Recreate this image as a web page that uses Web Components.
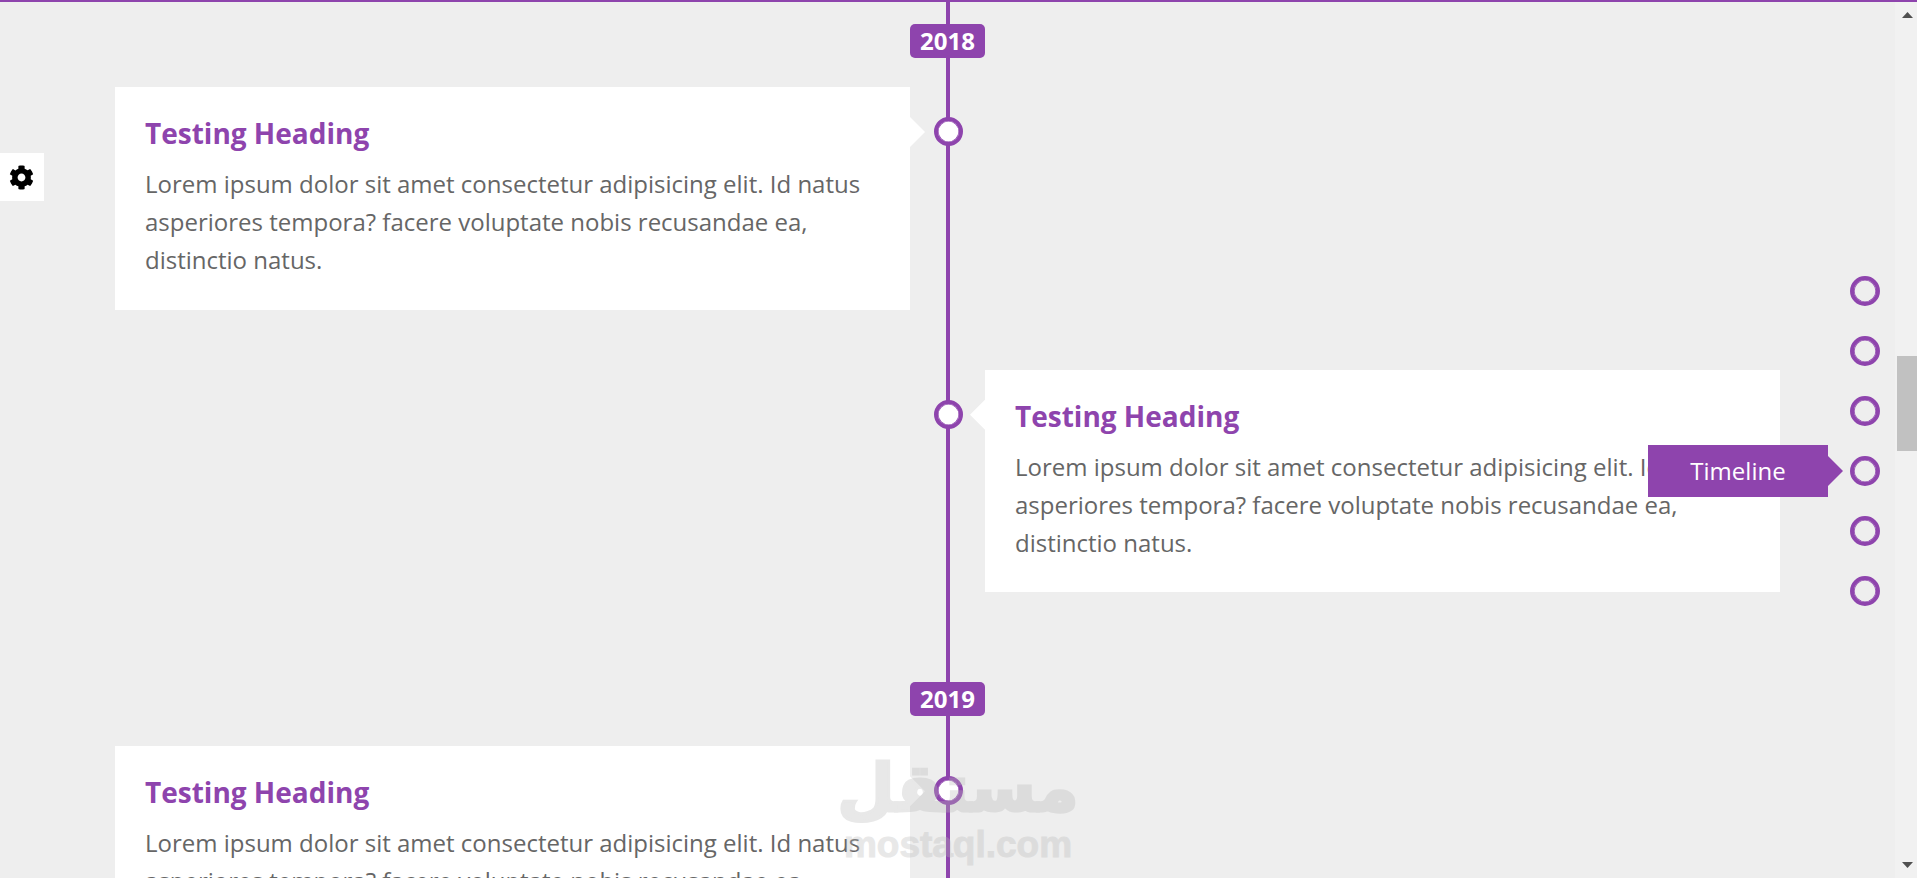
<!DOCTYPE html>
<html lang="en">
<head>
<meta charset="utf-8">
<title>Timeline</title>
<style>
    html, body { margin: 0; height: 100%; overflow: hidden; background: #eee; }
    body { font-family: "Open Sans", "Liberation Sans", sans-serif; }
</style>
</head>
<body>
<page-shell>
    <time-line>
        <year-badge>2018</year-badge>
        <timeline-item side="left" heading="Testing Heading">Lorem ipsum dolor sit amet consectetur adipisicing elit. Id natus asperiores tempora? facere voluptate nobis recusandae ea, distinctio natus.</timeline-item>
        <timeline-item side="right" heading="Testing Heading">Lorem ipsum dolor sit amet consectetur adipisicing elit. Id natus asperiores tempora? facere voluptate nobis recusandae ea, distinctio natus.</timeline-item>
        <year-badge class="later">2019</year-badge>
        <timeline-item side="left" heading="Testing Heading">Lorem ipsum dolor sit amet consectetur adipisicing elit. Id natus asperiores tempora? facere voluptate nobis recusandae ea, distinctio natus.</timeline-item>
    </time-line>
    <settings-tab slot="overlay"></settings-tab>
    <nav-dots slot="overlay" active="3" label="Timeline" count="6"></nav-dots>
    <water-mark slot="overlay"></water-mark>
</page-shell>

<script>
// petit helper : chaque composant a son shadow root ouvert
class BaseElement extends HTMLElement {
    constructor() {
        super();
        this.attachShadow({ mode: "open" });
        this.shadowRoot.append(this.constructor.template.content.cloneNode(true));
    }
}

function makeTemplate(html) {
    const t = document.createElement("template");
    t.innerHTML = html;
    return t;
}

class PageShell extends BaseElement {}
PageShell.template = makeTemplate(`
<style>
    :host { display: flex; flex-direction: column; height: 878px; width: 1917px; background: #eee; }
    .progress { height: 2px; flex: none; background: #8e44ad; }
    .row { display: flex; flex: 1; min-height: 0; }
    main { position: relative; width: 1895px; flex: none; overflow: hidden; }
</style>
<div class="progress"></div>
<div class="row">
    <main>
        <slot></slot>
        <slot name="overlay"></slot>
    </main>
    <fake-scrollbar></fake-scrollbar>
</div>
`);

class FakeScrollbar extends BaseElement {}
FakeScrollbar.template = makeTemplate(`
<style>
    :host { display: flex; flex-direction: column; width: 22px; flex: none; background: #f1f1f1; position: relative; }
    .btn { height: 20px; display: flex; justify-content: flex-end; padding-right: 4px; flex: none; }
    .btn svg { width: 11px; height: 6px; margin-top: 10px; }
    .track { flex: 1; padding-top: 334px; padding-left: 2px; }
    .thumb { height: 95px; background: #c1c1c1; }
    .down svg { margin-top: 4px; transform: rotate(180deg); }
</style>
<div class="btn"><svg viewBox="0 0 11 6"><path d="M5.5 0 11 6H0z" fill="#505050"/></svg></div>
<div class="track"><div class="thumb"></div></div>
<div class="btn down"><svg viewBox="0 0 11 6"><path d="M5.5 0 11 6H0z" fill="#505050"/></svg></div>
`);

class TimeLine extends BaseElement {}
TimeLine.template = makeTemplate(`
<style>
    :host { display: block; position: relative; width: 1665px; margin: 0 auto; padding-top: 22px; }
    /* la ligne verticale passe sous les badges */
    .line { position: absolute; top: 0; bottom: 0; left: 831px; width: 4px; background: #8e44ad; }
    .content { position: relative; }
</style>
<div class="line"></div>
<div class="content"><slot></slot></div>
`);

class YearBadge extends BaseElement {}
YearBadge.template = makeTemplate(`
<style>
    :host { display: block; width: 75px; height: 34px; margin: 0 auto 29px; background: #8e44ad; color: #fff; border-radius: 5px;
        font: 700 24px/33px "Open Sans", sans-serif; text-align: center; }
    :host(.later) { margin-top: 90px; margin-bottom: 30px; }
</style>
<slot></slot>
`);

class TimelineItem extends BaseElement {
    static get observedAttributes() {
        return ["heading", "side"];
    }

    attributeChangedCallback(name, oldValue, newValue) {
        switch (name) {
            case "heading":
                this.shadowRoot.querySelector("h3").textContent = newValue;
                break;
        }
    }
}
TimelineItem.template = makeTemplate(`
<style>
    :host { display: grid; grid-template-columns: 795px 75px 795px; margin-bottom: 60px; }
    .card { position: relative; background: #fff; padding: 30px; height: 222.67px; box-sizing: border-box; }
    :host([side="left"]) .card { grid-column: 1; grid-row: 1; }
    :host([side="right"]) .card { grid-column: 3; grid-row: 1; }
    .card::after { content: ""; position: absolute; top: 30px; width: 15px; height: 30px; background: #fff; }
    :host([side="left"]) .card::after { left: 100%; clip-path: polygon(0 0, 100% 50%, 0 100%); }
    :host([side="right"]) .card::after { right: 100%; clip-path: polygon(100% 0, 0 50%, 100% 100%); }
    .dot { grid-column: 2; grid-row: 1; justify-self: center; width: 29px; height: 29px; box-sizing: border-box; margin: 30px 0 0 1px;
        border: 4px solid #8e44ad; box-shadow: inset 0 0 0 .6px #8e44ad; border-radius: 50%; background: #fff; }
    h3 { margin: 0 0 15px; font: 700 28px/33px "Open Sans", sans-serif; color: #8e44ad; }
    p { margin: 0; font: 400 24px/38px "Open Sans", sans-serif; color: #666; }
</style>
<div class="card">
    <h3></h3>
    <p><slot></slot></p>
</div>
<div class="dot"></div>
`);

class SettingsTab extends BaseElement {}
SettingsTab.template = makeTemplate(`
<style>
    :host { position: absolute; left: 0; top: 151px; width: 44px; height: 48px; background: #fff; display: flex; align-items: center; justify-content: center; }
    svg { width: 25px; height: 25px; margin-left: -1px; }
</style>
<svg viewBox="0 0 512 512"><path fill="#000" d="M487.4 315.7l-42.6-24.6c4.3-23.2 4.3-47 0-70.2l42.6-24.6c4.9-2.8 7.1-8.6 5.5-14-11.1-35.6-30-67.8-54.7-94.6-3.8-4.1-10-5.1-14.8-2.3L380.8 110c-17.9-15.4-38.5-27.3-60.8-35.1V25.8c0-5.6-3.9-10.5-9.4-11.7-36.7-8.2-74.3-7.8-109.2 0-5.5 1.2-9.4 6.1-9.4 11.7V75c-22.2 7.9-42.8 19.8-60.8 35.1L88.7 85.5c-4.9-2.8-11-1.9-14.8 2.3-24.7 26.7-43.6 58.9-54.7 94.6-1.7 5.4.6 11.2 5.5 14L67.3 221c-4.3 23.2-4.3 47 0 70.2l-42.6 24.6c-4.9 2.8-7.1 8.6-5.5 14 11.1 35.6 30 67.8 54.7 94.6 3.8 4.1 10 5.1 14.8 2.3l42.6-24.6c17.9 15.4 38.5 27.3 60.8 35.1v49.2c0 5.6 3.9 10.5 9.4 11.7 36.7 8.2 74.3 7.8 109.2 0 5.5-1.2 9.4-6.1 9.4-11.7v-49.2c22.2-7.9 42.8-19.8 60.8-35.1l42.6 24.6c4.9 2.8 11 1.9 14.8-2.3 24.7-26.7 43.6-58.9 54.7-94.6 1.5-5.5-.7-11.3-5.6-14.1zM256 336c-44.1 0-80-35.9-80-80s35.9-80 80-80 80 35.9 80 80-35.9 80-80 80z"/></svg>
`);

class NavDots extends BaseElement {
    connectedCallback() {
        const list = this.shadowRoot.querySelector(".list");
        const count = Number(this.getAttribute("count"));
        const active = Number(this.getAttribute("active"));
        for (let i = 0; i < count; i++) {
            const dot = document.createElement("div");
            dot.className = "dot";
            if (i === active) {
                const tip = document.createElement("span");
                tip.className = "tip";
                tip.textContent = this.getAttribute("label");
                dot.append(tip);
            }
            list.append(dot);
        }
    }
}
NavDots.template = makeTemplate(`
<style>
    :host { position: absolute; right: 15px; top: 274px; }
    .list { display: flex; flex-direction: column; gap: 30px; }
    .dot { position: relative; width: 30px; height: 30px; box-sizing: border-box; border: 4px solid #8e44ad; box-shadow: inset 0 0 0 .6px #8e44ad; border-radius: 50%; }
    .tip { position: absolute; right: 48px; top: -15px; width: 180px; height: 52px; background: #8e44ad; color: #fff;
        font: 400 24px/52px "Open Sans", sans-serif; text-align: center; box-sizing: border-box; }
    .tip::after { content: ""; position: absolute; left: 100%; top: 11px; width: 15px; height: 30px; background: #8e44ad;
        clip-path: polygon(0 0, 100% 50%, 0 100%); }
</style>
<div class="list"></div>
`);

class WaterMark extends BaseElement {}
WaterMark.template = makeTemplate(`
<style>
    :host { position: absolute; left: 843px; top: 747px; width: 230px; height: 120px; pointer-events: none; color: rgb(185,185,185); opacity: .32;
        display: flex; flex-direction: column; align-items: center; font-weight: 700; }
    .ar { font: 700 66px/80px "DejaVu Sans", sans-serif; -webkit-text-stroke: 3px rgb(185,185,185); white-space: nowrap; }
    .en { font: 700 37px/32px "Liberation Sans", sans-serif; -webkit-text-stroke: 1px rgb(185,185,185); white-space: nowrap; }
</style>
<span class="ar" lang="ar" dir="rtl">مستقل</span>
<span class="en">mostaql.com</span>
`);

// on enregistre tout le monde
customElements.define("fake-scrollbar", FakeScrollbar);
customElements.define("page-shell", PageShell);
customElements.define("time-line", TimeLine);
customElements.define("year-badge", YearBadge);
customElements.define("timeline-item", TimelineItem);
customElements.define("settings-tab", SettingsTab);
customElements.define("nav-dots", NavDots);
customElements.define("water-mark", WaterMark);
</script>
</body>
</html>
